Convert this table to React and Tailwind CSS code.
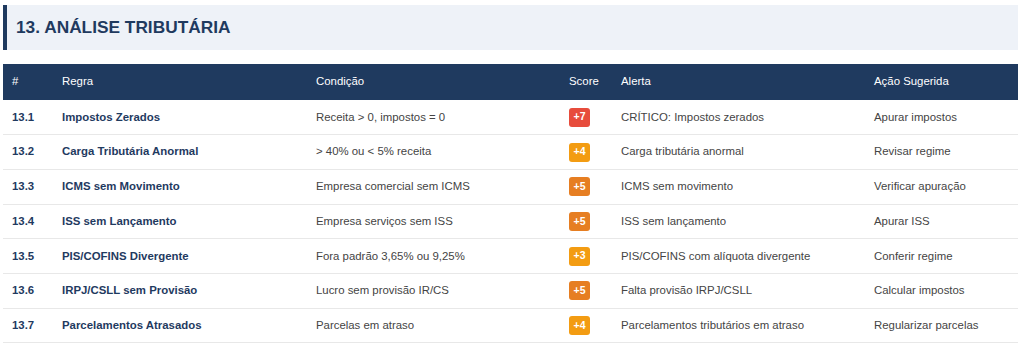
const badgeColor = {
  red:    'bg-[#e74c3c]',
  amber:  'bg-[#f39c12]',
  orange: 'bg-[#e67e22]',
}

const rows = [
  { id: '13.1', rule: 'Impostos Zerados', cond: 'Receita > 0, impostos = 0', score: '+7', tone: 'red', alert: 'CRÍTICO: Impostos zerados', action: 'Apurar impostos' },
  { id: '13.2', rule: 'Carga Tributária Anormal', cond: '> 40% ou < 5% receita', score: '+4', tone: 'amber', alert: 'Carga tributária anormal', action: 'Revisar regime' },
  { id: '13.3', rule: 'ICMS sem Movimento', cond: 'Empresa comercial sem ICMS', score: '+5', tone: 'orange', alert: 'ICMS sem movimento', action: 'Verificar apuração' },
  { id: '13.4', rule: 'ISS sem Lançamento', cond: 'Empresa serviços sem ISS', score: '+5', tone: 'orange', alert: 'ISS sem lançamento', action: 'Apurar ISS' },
  { id: '13.5', rule: 'PIS/COFINS Divergente', cond: 'Fora padrão 3,65% ou 9,25%', score: '+3', tone: 'amber', alert: 'PIS/COFINS com alíquota divergente', action: 'Conferir regime' },
  { id: '13.6', rule: 'IRPJ/CSLL sem Provisão', cond: 'Lucro sem provisão IR/CS', score: '+5', tone: 'orange', alert: 'Falta provisão IRPJ/CSLL', action: 'Calcular impostos' },
  { id: '13.7', rule: 'Parcelamentos Atrasados', cond: 'Parcelas em atraso', score: '+4', tone: 'amber', alert: 'Parcelamentos tributários em atraso', action: 'Regularizar parcelas' },
]

export default function App() {
  return (
    <div className="bg-white w-[1024px] h-[347px] overflow-hidden px-[3px] pt-[5px] font-['Liberation_Sans',Arial,sans-serif]">
      <div className="h-[45px] flex items-center bg-[#eef2f8] border-l-4 border-[#1f3a5f] pl-[9px] mr-[3px]">
        <h2 className="text-[17.3px] font-bold text-[#1f3a5f]">13. ANÁLISE TRIBUTÁRIA</h2>
      </div>
      <table className="mt-[14px] w-[1015px] table-fixed border-collapse text-[11.4px]">
        <colgroup>
          <col className="w-[50px]" />
          <col className="w-[254px]" />
          <col className="w-[253px]" />
          <col className="w-[52px]" />
          <col className="w-[253px]" />
          <col className="w-[153px]" />
        </colgroup>
        <thead>
          <tr className="bg-[#1f3a5f] text-white h-[36px]">
            <th className="px-[9px] text-left font-normal">#</th>
            <th className="px-[9px] text-left font-normal">Regra</th>
            <th className="px-[9px] text-left font-normal">Condição</th>
            <th className="px-[9px] text-left font-normal">Score</th>
            <th className="px-[9px] text-left font-normal">Alerta</th>
            <th className="px-[9px] text-left font-normal">Ação Sugerida</th>
          </tr>
        </thead>
        <tbody>
          {rows.map(r => (
            <tr key={r.id} className="h-[34.7px] border-b border-[#e8e8e8]">
              <td className="px-[9px] font-bold text-[#1f3a5f]">{r.id}</td>
              <td className="px-[9px] font-bold text-[#1f3a5f]">{r.rule}</td>
              <td className="px-[9px] text-[#444]">{r.cond}</td>
              <td className="px-[9px]">
                <span className={`inline-flex items-center justify-center w-[21px] h-[19px] rounded-[3px] text-white text-[10.5px] font-bold ${badgeColor[r.tone]}`}>
                  {r.score}
                </span>
              </td>
              <td className="px-[9px] text-[#444]">{r.alert}</td>
              <td className="px-[9px] text-[#444]">{r.action}</td>
            </tr>
          ))}
        </tbody>
      </table>
    </div>
  )
}
